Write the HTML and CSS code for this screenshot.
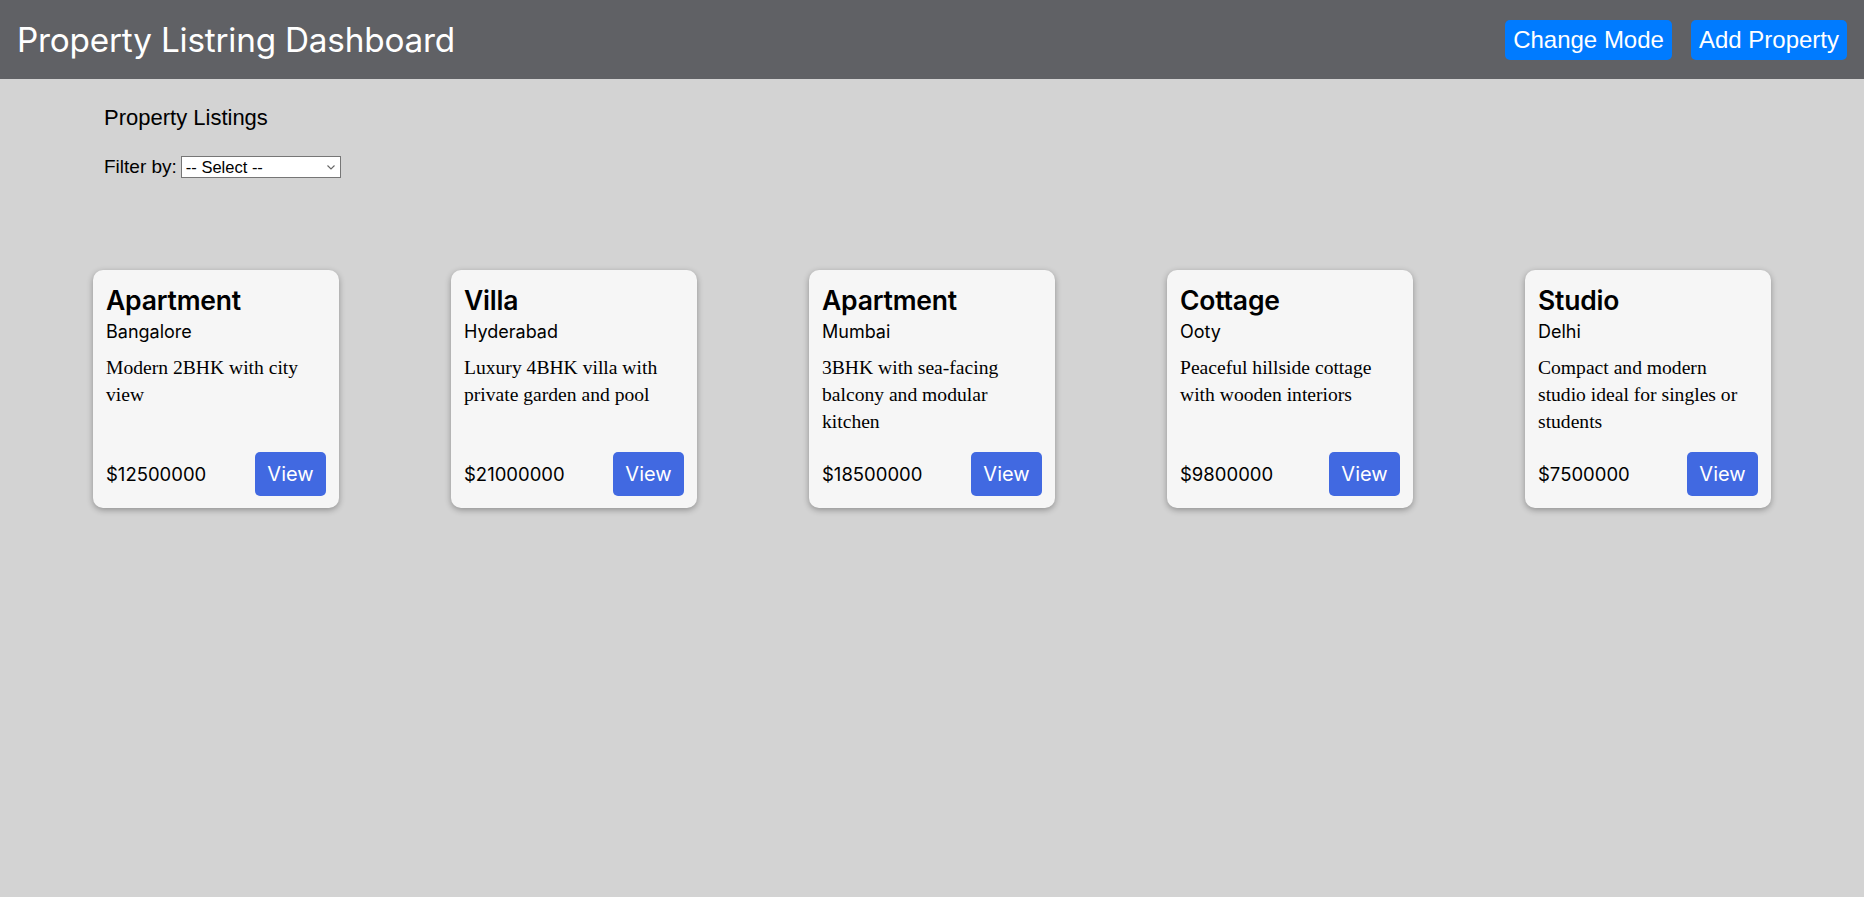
FILE: index.html
```html
<!DOCTYPE html>
<html lang="en">
<head>
<meta charset="utf-8">
<title>Property Listring Dashboard</title>
<link rel="stylesheet" href="styles.css">
</head>
<body>
<header class="topbar">
  <h1 class="topbar-title">Property Listring Dashboard</h1>
  <div class="topbar-actions">
    <button class="top-btn">Change Mode</button>
    <button class="top-btn">Add Property</button>
  </div>
</header>
<main class="content">
  <section class="listing-head">
    <h2 class="listing-title">Property Listings</h2>
    <div class="filter-row">
      <label class="filter-label" for="filter">Filter by:</label>
      <select id="filter" class="filter-select">
        <option>-- Select --</option>
      </select>
    </div>
  </section>
  <section class="cards">
    <article class="card">
      <h3 class="card-type">Apartment</h3>
      <h4 class="card-city">Bangalore</h4>
      <p class="card-desc">Modern 2BHK with city view</p>
      <div class="card-foot"><span class="card-price">$12500000</span><button class="view-btn">View</button></div>
    </article>
    <article class="card">
      <h3 class="card-type">Villa</h3>
      <h4 class="card-city">Hyderabad</h4>
      <p class="card-desc">Luxury 4BHK villa with private garden and pool</p>
      <div class="card-foot"><span class="card-price">$21000000</span><button class="view-btn">View</button></div>
    </article>
    <article class="card">
      <h3 class="card-type">Apartment</h3>
      <h4 class="card-city">Mumbai</h4>
      <p class="card-desc">3BHK with sea-facing balcony and modular kitchen</p>
      <div class="card-foot"><span class="card-price">$18500000</span><button class="view-btn">View</button></div>
    </article>
    <article class="card">
      <h3 class="card-type">Cottage</h3>
      <h4 class="card-city">Ooty</h4>
      <p class="card-desc">Peaceful hillside cottage with wooden interiors</p>
      <div class="card-foot"><span class="card-price">$9800000</span><button class="view-btn">View</button></div>
    </article>
    <article class="card">
      <h3 class="card-type">Studio</h3>
      <h4 class="card-city">Delhi</h4>
      <p class="card-desc">Compact and modern studio ideal for singles or students</p>
      <div class="card-foot"><span class="card-price">$7500000</span><button class="view-btn">View</button></div>
    </article>
  </section>
</main>
</body>
</html>
```
FILE: styles.css
```css
html, body {
  margin: 0;
  padding: 0;
}
body {
  background: #d3d3d3;
  min-height: 897px;
  font-family: "Liberation Sans", Arial, sans-serif;
  color: #000;
}
.topbar {
  height: 79px;
  background: #606165;
  display: flex;
  align-items: center;
  justify-content: space-between;
  padding: 0 17px;
  box-sizing: border-box;
}
.topbar-title {
  margin: 0;
  font-family: Inter, "Noto Sans", sans-serif;
  font-weight: 400;
  font-size: 33.3px;
  color: #fff;
  letter-spacing: -0.2px;
}
.topbar-actions {
  display: flex;
  gap: 19px;
}
.top-btn {
  background: #007bff;
  color: #fff;
  border: none;
  border-radius: 5px;
  font-family: "Liberation Sans", Arial, sans-serif;
  font-size: 24px;
  height: 40px;
  padding: 0 8px;
}
.listing-head {
  padding: 26px 0 0 104px;
}
.listing-title {
  margin: 0;
  font-size: 22px;
  font-weight: 400;
  line-height: 25px;
}
.filter-row {
  margin-top: 26px;
  display: flex;
  align-items: center;
  gap: 4px;
}
.filter-label {
  font-size: 19px;
}
.filter-select {
  appearance: none;
  -webkit-appearance: none;
  width: 160px;
  height: 22px;
  font-family: "Liberation Sans", Arial, sans-serif;
  font-size: 16.5px;
  color: #000;
  border: 1px solid #767676;
  border-radius: 0;
  background-color: #fff;
  background-image: url("data:image/svg+xml,%3Csvg xmlns='http://www.w3.org/2000/svg' width='8' height='5' viewBox='0 0 8 5'%3E%3Cpath d='M0.5 0.5 L4 4 L7.5 0.5' fill='none' stroke='%23666' stroke-width='1.1'/%3E%3C/svg%3E");
  background-repeat: no-repeat;
  background-position: right 5px center;
  padding: 0 16px 0 4px;
}
.cards {
  display: flex;
  justify-content: center;
  gap: 112px;
  margin-top: 92px;
}
.card {
  width: 246px;
  box-sizing: border-box;
  background: #f6f6f6;
  border-radius: 10px;
  box-shadow: 0 2px 6px rgba(0, 0, 0, 0.32);
  padding: 12px 13px;
  display: flex;
  flex-direction: column;
}
.card-type {
  margin: 0;
  font-family: Inter, "Noto Sans", sans-serif;
  font-size: 26.5px;
  font-weight: 600;
  line-height: 36px;
  letter-spacing: -0.2px;
}
.card-city {
  margin: 0;
  font-family: Inter, "Noto Sans", sans-serif;
  font-size: 18px;
  font-weight: 400;
  line-height: 27px;
}
.card-desc {
  margin: 9px 0 17px;
  font-family: "Liberation Serif", "Times New Roman", serif;
  font-size: 19.6px;
  line-height: 27px;
  flex: 1;
}
.card-foot {
  display: flex;
  align-items: center;
  justify-content: space-between;
}
.card-price {
  font-family: Inter, "Noto Sans", sans-serif;
  font-size: 18.5px;
}
.view-btn {
  background: #4169e1;
  color: #fff;
  border: none;
  border-radius: 5px;
  width: 71px;
  height: 44px;
  font-family: Inter, "Noto Sans", sans-serif;
  font-size: 20px;
  padding: 0;
}
```
